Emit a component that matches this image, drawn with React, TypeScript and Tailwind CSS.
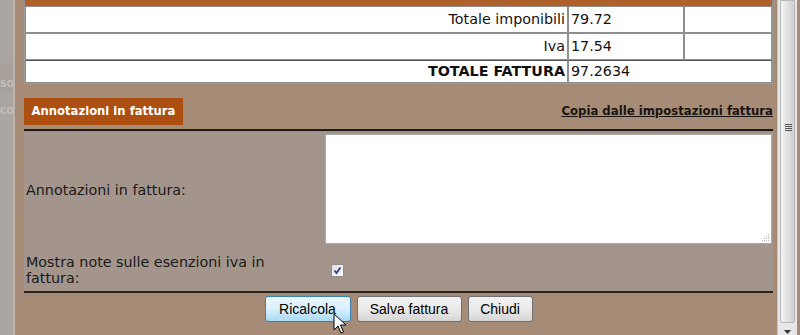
import React from "react";

function Cursor() {
  return (
    <svg className="absolute left-[333px] top-[313px]" width="14" height="22" viewBox="0 0 14 22">
      <path d="M1 1 L1 17 L5 13 L8 20 L10.5 19 L7.5 12 L13 12 Z" fill="#fff" stroke="#000" strokeWidth="1" strokeLinejoin="round" />
    </svg>
  );
}

export default function App() {
  const cell = "border border-[#8f8f8f] bg-white px-[2px] text-[14.3px] text-[#111]";

  return (
    <div className="relative flex h-[335px] w-[800px] overflow-hidden bg-[#a68b77] font-['DejaVu_Sans',Verdana,sans-serif]">
      {/* page behind the dialog */}
      <div className="flex w-[15px] shrink-0 flex-col border-r-2 border-[#b9b3ad] bg-[#aba6a1]">
        <div className="h-[63px]" />
        <div className="flex h-[30px] items-end overflow-hidden bg-[#a8a19b] pb-[4px] text-[9px] font-bold leading-[10px] text-[#c6c0ba]">
          <span>SO</span>
        </div>
        <div className="flex h-[30px] items-center text-[9px] font-bold leading-[10px] text-[#c6c0ba]">
          <span className="mt-[6px]">CO</span>
        </div>
      </div>

      {/* dialog body */}
      <div className="flex w-[762px] shrink-0 flex-col pl-[9px] pr-[4px]">
        <div className="h-[6px] border-x border-[#8f8f8f] bg-[#b0602b]" />
        <table className="w-[749px] border-separate border-spacing-0 border-x border-b border-[#9a9a9a]">
          <tbody>
            <tr className="h-[27px]">
              <td className={`${cell} w-[543px] text-right`}>Totale imponibili</td>
              <td className={`${cell} w-[116px]`}>79.72</td>
              <td className={cell}></td>
            </tr>
            <tr className="h-[27px]">
              <td className={`${cell} text-right`}>Iva</td>
              <td className={cell}>17.54</td>
              <td className={cell}></td>
            </tr>
            <tr className="h-[23px]">
              <td className={`${cell} border-t-[#555] text-right font-bold`}>TOTALE FATTURA</td>
              <td className={`${cell} border-t-[#555]`} colSpan={2}>
                97.2634
              </td>
            </tr>
          </tbody>
        </table>

        {/* annotations header */}
        <div className="mt-[14px] flex w-[749px] items-end justify-between border-b-2 border-[#1e1a17] pb-[4px]">
          <div className="flex h-[27px] w-[159px] items-center justify-center bg-[#ad4f10] text-[11.6px] font-bold text-white">
            Annotazioni in fattura
          </div>
          <a className="mb-[5px] text-[11.7px] font-bold text-[#1a1410] underline">Copia dalle impostazioni fattura</a>
        </div>

        <div className="mt-[1px] w-[749px] bg-[#a3958b] text-[14.3px] text-[#1a1a1a]">
          <div className="flex h-[117px] items-center">
            <div className="w-[301px] pl-[2px]">Annotazioni in fattura:</div>
            <div className="flex-1 pb-[3px]">
              <div className="relative h-[110px] w-[447px] border border-[#aaa] bg-white">
                <svg className="absolute bottom-[1px] right-[1px]" width="8" height="8" viewBox="0 0 8 8">
                  <g fill="#b5b5b5">
                    <rect x="6" y="0" width="1" height="1" />
                    <rect x="4" y="2" width="1" height="1" />
                    <rect x="6" y="2" width="1" height="1" />
                    <rect x="2" y="4" width="1" height="1" />
                    <rect x="4" y="4" width="1" height="1" />
                    <rect x="6" y="4" width="1" height="1" />
                    <rect x="0" y="6" width="1" height="1" />
                    <rect x="2" y="6" width="1" height="1" />
                    <rect x="4" y="6" width="1" height="1" />
                    <rect x="6" y="6" width="1" height="1" />
                  </g>
                </svg>
              </div>
            </div>
          </div>
          <div className="flex h-[42px] items-center">
            <div className="w-[301px] pl-[2px] pr-[20px] leading-[16px]">Mostra note sulle esenzioni iva in fattura:</div>
            <div className="flex flex-1 items-center pl-[6px]">
              <div className="flex h-[13px] w-[13px] items-center justify-center border border-[#8e8f8f] bg-gradient-to-br from-[#dcdcdc] to-white">
                <svg width="9" height="9" viewBox="0 0 9 9">
                  <path d="M1.5 4.5 L3.5 7 L7.5 1.5" fill="none" stroke="#2b3b8f" strokeWidth="1.8" />
                </svg>
              </div>
            </div>
          </div>
        </div>

        <div className="w-[749px] border-t-2 border-[#2a2420]" />

        <div className="mt-[3px] flex w-[749px] justify-center gap-[6px] font-['Liberation_Sans',Arial,sans-serif] text-[14px] text-black">
          <button className="h-[26px] w-[86px] rounded-[3px] border border-[#3c7fb1] bg-gradient-to-b from-[#eaf6fd] via-[#d9f0fc] to-[#a7d9f5]">
            Ricalcola
          </button>
          <button className="h-[26px] w-[105px] rounded-[3px] border border-[#707070] bg-gradient-to-b from-[#f2f2f2] via-[#ebebeb] to-[#d5d5d5]">
            Salva fattura
          </button>
          <button className="h-[26px] w-[65px] rounded-[3px] border border-[#707070] bg-gradient-to-b from-[#f2f2f2] via-[#ebebeb] to-[#d5d5d5]">
            Chiudi
          </button>
        </div>
      </div>

      {/* scrollbar */}
      <div className="flex w-[23px] shrink-0 pr-[3px]">
        <div className="flex w-full flex-col border-l border-[#c9c4c0] bg-[#e7e7e8]">
          <div className="relative mx-[2px] flex-1 rounded-b-[2px] border border-[#b8b8ba] bg-gradient-to-r from-[#f4f4f5] via-[#e2e2e4] to-[#cfcfd2]">
            <div className="absolute left-[4px] top-[123px] flex w-[7px] flex-col gap-[1px]">
              <div className="h-px bg-[#555]" />
              <div className="h-px bg-[#555]" />
              <div className="h-px bg-[#555]" />
              <div className="h-px bg-[#555]" />
            </div>
          </div>
          <div className="flex h-[12px] items-end justify-center pb-[1px]">
            <svg width="7" height="4" viewBox="0 0 7 4">
              <path d="M0 0 L7 0 L3.5 4 Z" fill="#333" />
            </svg>
          </div>
        </div>
      </div>

      <Cursor />
    </div>
  );
}
